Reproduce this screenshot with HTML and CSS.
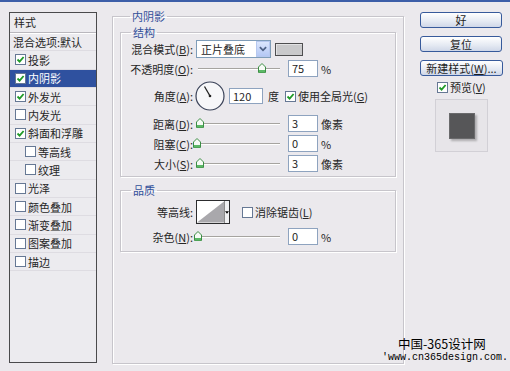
FILE: index.html
```html
<!DOCTYPE html>
<html lang="zh-CN">
<head>
  <meta charset="UTF-8" />
  <meta name="viewport" content="width=device-width, initial-scale=1.0" />
  <title>图层样式</title>
  <link rel="stylesheet" href="styles.css">
</head>
<body>
  <div class="topbar"></div>

  <div class="dialog">
    <!-- style list -->
    <div class="styles">
      <div class="styles-head">样式</div>
      <div class="item plain">混合选项:默认</div>
      <div class="item"><span class="cb on"><svg viewBox="0 0 9 9"><path d="M1.5 4.5 L3.6 6.6 L7.6 2"/></svg></span>投影</div>
      <div class="item selected"><span class="cb on"><svg viewBox="0 0 9 9"><path d="M1.5 4.5 L3.6 6.6 L7.6 2"/></svg></span>内阴影</div>
      <div class="item"><span class="cb on"><svg viewBox="0 0 9 9"><path d="M1.5 4.5 L3.6 6.6 L7.6 2"/></svg></span>外发光</div>
      <div class="item"><span class="cb"></span>内发光</div>
      <div class="item"><span class="cb on"><svg viewBox="0 0 9 9"><path d="M1.5 4.5 L3.6 6.6 L7.6 2"/></svg></span>斜面和浮雕</div>
      <div class="item sub"><span class="cb"></span>等高线</div>
      <div class="item sub"><span class="cb"></span>纹理</div>
      <div class="item"><span class="cb"></span>光泽</div>
      <div class="item"><span class="cb"></span>颜色叠加</div>
      <div class="item"><span class="cb"></span>渐变叠加</div>
      <div class="item"><span class="cb"></span>图案叠加</div>
      <div class="item"><span class="cb"></span>描边</div>
    </div>

    <!-- settings -->
    <fieldset class="group outer">
      <legend>内阴影</legend>

      <fieldset class="group structure">
        <legend>结构</legend>

        <div class="row r-blend">
          <label class="lbl">混合模式(<u>B</u>):</label>
          <div class="select">
            <span class="select-text">正片叠底</span>
            <span class="select-btn"><svg viewBox="0 0 9 6"><path d="M1 1 L4.5 4.5 L8 1"/></svg></span>
          </div>
          <span class="swatch"></span>
        </div>

        <div class="row r-opacity">
          <label class="lbl">不透明度(<u>O</u>):</label>
          <div class="slider"><span class="thumb" style="left: 62px"><svg viewBox="0 0 8 10"><path class="t-top" d="M0.5 4 L4 0.5 L7.5 4 L7.5 9.5 L0.5 9.5 Z"/><rect class="t-base" x="1" y="7" width="6" height="2.5"/></svg></span></div>
          <span class="num">75</span>
          <span class="unit">%</span>
        </div>

        <div class="row r-angle">
          <label class="lbl">角度(<u>A</u>):</label>
          <svg class="dial" viewBox="0 0 30 30">
            <circle cx="15" cy="15" r="14" />
            <line x1="15" y1="15" x2="9.5" y2="5.5" />
            <circle class="dot" cx="15" cy="15" r="1.3" />
          </svg>
          <span class="num wide">120</span>
          <span class="unit deg">度</span>
          <span class="cb on global"><svg viewBox="0 0 9 9"><path d="M1.5 4.5 L3.6 6.6 L7.6 2"/></svg></span>
          <span class="cb-text">使用全局光(<u>G</u>)</span>
        </div>

        <div class="row r-dist">
          <label class="lbl">距离(<u>D</u>):</label>
          <div class="slider"><span class="thumb" style="left: 0px"><svg viewBox="0 0 8 10"><path class="t-top" d="M0.5 4 L4 0.5 L7.5 4 L7.5 9.5 L0.5 9.5 Z"/><rect class="t-base" x="1" y="7" width="6" height="2.5"/></svg></span></div>
          <span class="num">3</span>
          <span class="unit">像素</span>
        </div>

        <div class="row r-choke">
          <label class="lbl">阻塞(<u>C</u>):</label>
          <div class="slider"><span class="thumb" style="left: -3px"><svg viewBox="0 0 8 10"><path class="t-top" d="M0.5 4 L4 0.5 L7.5 4 L7.5 9.5 L0.5 9.5 Z"/><rect class="t-base" x="1" y="7" width="6" height="2.5"/></svg></span></div>
          <span class="num">0</span>
          <span class="unit">%</span>
        </div>

        <div class="row r-size">
          <label class="lbl">大小(<u>S</u>):</label>
          <div class="slider"><span class="thumb" style="left: 0px"><svg viewBox="0 0 8 10"><path class="t-top" d="M0.5 4 L4 0.5 L7.5 4 L7.5 9.5 L0.5 9.5 Z"/><rect class="t-base" x="1" y="7" width="6" height="2.5"/></svg></span></div>
          <span class="num">3</span>
          <span class="unit">像素</span>
        </div>
      </fieldset>

      <fieldset class="group quality">
        <legend>品质</legend>

        <div class="row r-contour">
          <label class="lbl">等高线:</label>
          <div class="contour">
            <svg class="curve" viewBox="0 0 28 22"><polygon points="0,22 28,0 28,22" /></svg>
            <span class="contour-drop"><svg viewBox="0 0 5 3"><path d="M0 0 L5 0 L2.5 3 Z"/></svg></span>
          </div>
          <span class="cb aa"></span>
          <span class="cb-text">消除锯齿(<u>L</u>)</span>
        </div>

        <div class="row r-noise">
          <label class="lbl">杂色(<u>N</u>):</label>
          <div class="slider"><span class="thumb" style="left: -2px"><svg viewBox="0 0 8 10"><path class="t-top" d="M0.5 4 L4 0.5 L7.5 4 L7.5 9.5 L0.5 9.5 Z"/><rect class="t-base" x="1" y="7" width="6" height="2.5"/></svg></span></div>
          <span class="num">0</span>
          <span class="unit">%</span>
        </div>
      </fieldset>
    </fieldset>

    <!-- buttons -->
    <div class="actions">
      <button class="btn">好</button>
      <button class="btn">复位</button>
      <button class="btn new">新建样式(<u>W</u>)...</button>
      <div class="preview-toggle">
        <span class="cb on"><svg viewBox="0 0 9 9"><path d="M1.5 4.5 L3.6 6.6 L7.6 2"/></svg></span>
        <span class="cb-text">预览(<u>V</u>)</span>
      </div>
      <div class="preview"><span class="preview-swatch"></span></div>
    </div>
  </div>

  <div class="watermark">
    <div class="wm-title">中国-365设计网</div>
    <div class="wm-url">'www.cn365design.com.</div>
  </div>
</body>
</html>
```

FILE: styles.css
```css
body {
  margin: 0;
  width: 510px;
  height: 371px;
  overflow: hidden;
  position: relative;
  background: #ebe9ed;
  font-family: "Noto Sans CJK SC", sans-serif;
  font-size: 11px;
  color: #262626;
}
u {
  text-decoration: underline;
}
.topbar {
  height: 2px;
  background: #3d5ea8;
}
.dialog {
  display: flex;
  align-items: flex-start;
  padding-left: 9px;
}

/* left list */
.styles {
  margin-top: 10px;
  width: 88px;
  height: 351px;
  box-sizing: border-box;
  border: 1px solid #4a4a4c;
  background: #ecebef;
}
.styles-head {
  height: 19px;
  line-height: 19px;
  padding-left: 4px;
  border-bottom: 1px solid #b9b7bd;
  box-shadow: 0 1px 0 #fff;
}
.item {
  height: 18.33px;
  box-sizing: border-box;
  display: flex;
  align-items: center;
  padding-left: 5px;
  border-bottom: 1px solid #dedce2;
  white-space: nowrap;
}
.item:first-of-type {
  margin-top: 1px;
}
.item.plain {
  padding-left: 3px;
}
.item.sub {
  padding-left: 15px;
}
.item.selected {
  background: #2f519f;
  color: #fff;
}
.cb {
  width: 11px;
  height: 11px;
  box-sizing: border-box;
  border: 1px solid #667894;
  background: #fff;
  margin-right: 2px;
  flex-shrink: 0;
  display: inline-flex;
}
.cb svg {
  width: 9px;
  height: 9px;
}
.cb path {
  fill: none;
  stroke: #1f9a27;
  stroke-width: 1.8;
}

/* settings groups */
.group {
  margin: 0;
  min-inline-size: 0;
  box-sizing: border-box;
  border: 1px solid #c7c5cb;
  box-shadow: 1px 1px 0 #fff, inset 1px 1px 0 #fff;
}
.group legend {
  padding: 0 2px;
  margin-left: 10px;
  height: 14px;
  line-height: 14px;
  color: #32509a;
}
.outer {
  margin: 7px 0 0 15px;
  width: 292px;
  height: 355px;
  padding: 0 7px;
}
.structure {
  width: 276px;
  margin-top: 2px;
  padding: 0 0 4px 0;
}
.quality {
  width: 276px;
  margin-top: 6px;
  padding: 0 0 6px 0;
}
.row {
  display: flex;
  align-items: center;
  white-space: nowrap;
}
.lbl {
  width: 72px;
  text-align: right;
  flex-shrink: 0;
}
.r-blend { margin-top: 1px; height: 18px; }
.r-opacity { margin-top: 2px; height: 17px; }
.r-angle { margin-top: 4px; height: 30px; }
.r-dist { margin-top: 4px; height: 17px; }
.r-choke { margin-top: 3px; height: 17px; }
.r-size { margin-top: 3px; height: 17px; }
.r-contour { margin-top: 3px; height: 24px; }
.r-noise { margin-top: 4px; height: 17px; }

.select {
  margin-left: 3px;
  width: 75px;
  height: 18px;
  box-sizing: border-box;
  border: 1px solid #7f9db9;
  background: #fff;
  display: flex;
  align-items: center;
}
.select-text {
  padding-left: 4px;
}
.select-btn {
  margin-left: auto;
  width: 14px;
  height: 16px;
  box-sizing: border-box;
  border: 1px solid #b6c8ef;
  background: linear-gradient(#dbe6fd, #b4c8f4);
  display: flex;
  align-items: center;
  justify-content: center;
}
.select-btn svg {
  width: 8px;
  height: 6px;
}
.select-btn path {
  fill: none;
  stroke: #4d6185;
  stroke-width: 2;
}
.swatch {
  margin-left: 4px;
  width: 28px;
  height: 13px;
  box-sizing: border-box;
  border: 1px solid #4e4e50;
  background: #c9c9cb;
  box-shadow: inset 1px 1px 0 #e2e2e4;
}

.slider {
  position: relative;
  margin-left: 3px;
  width: 86px;
  height: 17px;
  flex-shrink: 0;
}
.slider::before {
  content: "";
  position: absolute;
  left: 2px;
  right: 2px;
  top: 8px;
  height: 1px;
  background: #a6a4a0;
  box-shadow: 0 1px 0 #fff;
}
.thumb {
  position: absolute;
  top: 3px;
  width: 8px;
  height: 10px;
}
.thumb svg {
  display: block;
  width: 8px;
  height: 10px;
}
.t-top {
  fill: #f6fbf5;
  stroke: #3c8d45;
  stroke-width: 1;
}
.t-base {
  fill: #5cb867;
}

.num {
  margin-left: 6px;
  width: 30px;
  height: 17px;
  box-sizing: border-box;
  border: 1px solid #8ea3bf;
  background: #fff;
  padding-left: 3px;
  line-height: 15px;
}
.num.wide {
  margin-left: 4px;
  width: 34px;
  height: 16px;
  line-height: 14px;
}
.unit {
  margin-left: 3px;
}
.unit.deg {
  margin-left: 5px;
}
.dial {
  margin-left: 2px;
  width: 30px;
  height: 30px;
  flex-shrink: 0;
}
.dial circle {
  fill: #f7f7f9;
  stroke: #3a4258;
  stroke-width: 1.2;
}
.dial line {
  stroke: #222;
  stroke-width: 1.3;
}
.dial .dot {
  fill: #222;
  stroke: none;
}
.cb.global {
  margin-left: 6px;
}
.cb-text {
  margin-left: 0;
}

.contour {
  margin-left: 3px;
  width: 34px;
  height: 24px;
  box-sizing: border-box;
  border: 1px solid #2c2c2e;
  background: #fff;
  display: flex;
}
.curve {
  width: 28px;
  height: 22px;
}
.curve polygon {
  fill: #a9a8ac;
}
.contour-drop {
  flex: 1;
  border-left: 1px solid #8a8a8a;
  background: #f1f1f3;
  display: flex;
  align-items: center;
  justify-content: center;
}
.contour-drop svg {
  width: 4px;
  height: 3px;
}
.cb.aa {
  margin-left: 12px;
}

/* right column */
.actions {
  margin: 10px 0 0 16px;
  width: 84px;
  display: flex;
  flex-direction: column;
}
.btn {
  width: 82px;
  height: 16px;
  padding: 0;
  margin: 0 0 8px 0;
  border: 1px solid #375a9b;
  border-radius: 3px;
  background: linear-gradient(#ffffff, #e4e9f2 60%, #cfd7e8);
  font-family: inherit;
  font-size: 11px;
  line-height: 14px;
  color: #1f1f1f;
}
.btn.new {
  width: 83px;
  margin-bottom: 5px;
}
.preview-toggle {
  display: flex;
  align-items: center;
  height: 12px;
  padding-left: 17px;
}
.preview {
  margin: 6px 0 0 15px;
  width: 53px;
  height: 53px;
  box-sizing: border-box;
  border: 1px solid #d2d0d6;
  background: #e7e5e9;
  display: flex;
  align-items: center;
  justify-content: center;
}
.preview-swatch {
  width: 26px;
  height: 26px;
  box-sizing: border-box;
  border: 1px solid #6a6a6c;
  background: #565658;
  box-shadow: 2px 2px 2px rgba(0, 0, 0, 0.25);
}

.watermark {
  position: absolute;
  left: 382px;
  top: 336px;
  color: #000;
}
.wm-title {
  margin-left: 16px;
  font-size: 12.5px;
  line-height: 15px;
}
.wm-url {
  font-family: "Liberation Mono", monospace;
  font-size: 10px;
  line-height: 14px;
}
```
